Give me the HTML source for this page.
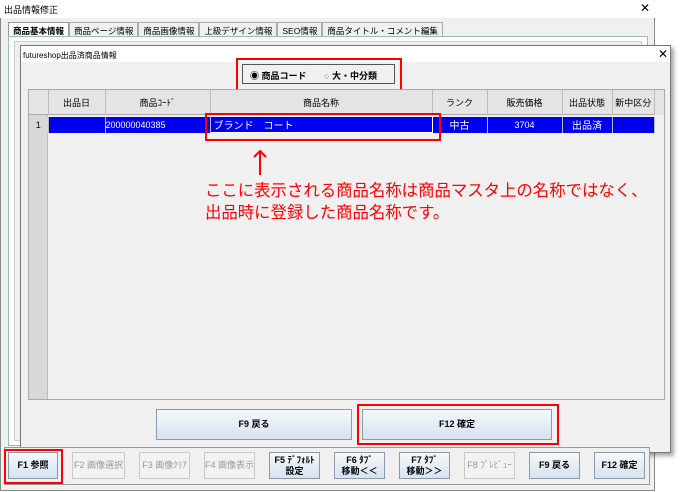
<!DOCTYPE html>
<html><head><meta charset="utf-8"><style>
*{box-sizing:border-box;margin:0;padding:0}
body{width:680px;height:492px;background:#fff;position:relative;overflow:hidden;font-family:"Liberation Sans","Noto Sans CJK JP",sans-serif;font-size:9px;color:#000}
.abs{position:absolute}
.btn{position:absolute;border:1px solid #8a9aad;background:linear-gradient(#f4f8fc,#d6e3f0);font-size:9px;font-weight:bold;display:flex;align-items:center;justify-content:center;text-align:center;line-height:11px}
.dis{color:#999;font-weight:normal;background:#f2f2f2;border-color:#c8c8c8}
.red{position:absolute;border:2px solid #f00}
th,td{font-weight:normal;font-size:9px;text-align:center;border-right:1px solid #bbb;height:100%}
</style></head><body>
<div class="abs" style="left:0;top:0;width:655px;height:491px;border:1px solid #888;border-top:none;background:#f0f0f0"></div>
<div class="abs" style="left:0;top:0;width:655px;height:18px;background:#fff"></div>
<div class="abs" style="left:4px;top:3px;font-size:9px">出品情報修正</div>
<div class="abs" style="left:640px;top:1px;font-size:12px">✕</div>
<div class="abs" style="left:8px;top:22px;height:15px;display:flex;font-size:8.5px">
<div style="border:1px solid #999;border-bottom:none;background:#fff;padding:2px 4px;font-weight:bold">商品基本情報</div>
<div style="border:1px solid #aaa;background:#f0f0f0;padding:2px 4px">商品ページ情報</div>
<div style="border:1px solid #aaa;background:#f0f0f0;padding:2px 4px">商品画像情報</div>
<div style="border:1px solid #aaa;background:#f0f0f0;padding:2px 4px">上級デザイン情報</div>
<div style="border:1px solid #aaa;background:#f0f0f0;padding:2px 4px">SEO情報</div>
<div style="border:1px solid #aaa;background:#f0f0f0;padding:2px 4px">商品タイトル・コメント編集</div>
</div>
<div class="abs" style="left:8px;top:36px;width:640px;height:410px;border:1px solid #9bb;background:#fff"></div>
<div class="abs" style="left:14px;top:41px;width:628px;height:400px;border:1px solid #ccc;background:#f0f0f0"></div>
<div class="abs" style="left:20px;top:45px;width:651px;height:408px;border:1px solid #777;background:#f0f0f0;box-shadow:3px 3px 4px rgba(0,0,0,.35)"></div>
<div class="abs" style="left:21px;top:46px;width:649px;height:16px;background:#fff"></div>
<div class="abs" style="left:23px;top:50px;font-size:8px">futureshop出品済商品情報</div>
<div class="abs" style="left:658px;top:47px;font-size:12px">✕</div>
<div class="abs" style="left:242px;top:64px;width:153px;height:20px;border:1px solid #555;background:#f0f0f0"></div>
<div class="abs" style="left:250px;top:69px;font-weight:bold;font-size:9px">◉ 商品コード</div>
<div class="abs" style="left:324px;top:69px;font-weight:bold;font-size:9px"><span style="font-weight:normal;color:#777">○</span> 大・中分類</div>
<div class="red" style="left:236px;top:58px;width:166px;height:33px"></div>
<div class="abs" style="left:28px;top:89px;width:637px;height:311px;border:1px solid #aaa;background:#f0f0f0"></div>
<div class="abs" style="left:29px;top:90px;width:19px;height:309px;background:#d8d8d8;border-right:1px solid #bbb"></div>
<table class="abs" style="left:29px;top:90px;width:626px;height:25px;border-collapse:collapse;background:#e4e4e4;border-bottom:1px solid #aaa"><tr>
<th style="width:19px"></th><th style="width:57px">出品日</th><th style="width:105px">商品ｺｰﾄﾞ</th><th style="width:222px">商品名称</th><th style="width:55px">ランク</th><th style="width:75px">販売価格</th><th style="width:50px">出品状態</th><th>新中区分</th></tr></table>
<div class="abs" style="left:655px;top:90px;width:9px;height:25px;background:#e4e4e4"></div>
<table class="abs" style="left:29px;top:116px;width:626px;height:17px;border-collapse:collapse;color:#fff;font-size:10px"><tr>
<td style="width:19px;background:#d8d8d8;color:#000">1</td><td style="width:57px;background:#0000f0"></td><td style="width:105px;background:#0000f0;text-align:left">200000040385</td><td style="width:222px;background:#0000f0;text-align:left;border:1px solid #fff;padding-left:3px;font-size:10px">ブランド　コート</td><td style="width:55px;background:#0000f0;font-size:10px">中古</td><td style="width:75px;background:#0000f0">3704</td><td style="width:50px;background:#0000f0;font-size:10px">出品済</td><td style="background:#0000f0"></td></tr></table>
<div class="red" style="left:205px;top:113px;width:236px;height:28px"></div>
<div class="abs" style="left:259px;top:152px;width:2px;height:23px;background:#f00"></div>
<svg class="abs" style="left:253px;top:149px" width="14" height="10"><path d="M1 8 L7 2 L13 8" stroke="#f00" stroke-width="2" fill="none"/></svg>
<div class="abs" style="left:205px;top:180px;color:#f00;font-size:16.4px;line-height:22px;white-space:nowrap">ここに表示される商品名称は商品マスタ上の名称ではなく、<br>出品時に登録した商品名称です。</div>
<div class="btn" style="left:156px;top:409px;width:196px;height:31px">F9 戻る</div>
<div class="btn" style="left:362px;top:409px;width:190px;height:31px">F12 確定</div>
<div class="red" style="left:357px;top:404px;width:202px;height:41px"></div>
<div class="abs" style="left:4px;top:447px;width:646px;height:38px;border:1px solid #999;background:#f0f0f0"></div>
<div class="btn" style="left:8px;top:452px;width:50px;height:27px">F1 参照</div>
<div class="red" style="left:4px;top:449px;width:59px;height:35px"></div>
<div class="btn dis" style="left:72px;top:452px;width:53px;height:27px">F2 画像選択</div>
<div class="btn dis" style="left:139px;top:452px;width:51px;height:27px">F3 画像ｸﾘｱ</div>
<div class="btn dis" style="left:204px;top:452px;width:51px;height:27px">F4 画像表示</div>
<div class="btn" style="left:269px;top:452px;width:51px;height:27px">F5 ﾃﾞﾌｫﾙﾄ<br>設定</div>
<div class="btn" style="left:334px;top:452px;width:51px;height:27px">F6 ﾀﾌﾞ<br>移動＜＜</div>
<div class="btn" style="left:399px;top:452px;width:51px;height:27px">F7 ﾀﾌﾞ<br>移動＞＞</div>
<div class="btn dis" style="left:464px;top:452px;width:51px;height:27px">F8 ﾌﾟﾚﾋﾞｭｰ</div>
<div class="btn" style="left:529px;top:452px;width:51px;height:27px">F9 戻る</div>
<div class="btn" style="left:594px;top:452px;width:51px;height:27px">F12 確定</div>
</body></html>
